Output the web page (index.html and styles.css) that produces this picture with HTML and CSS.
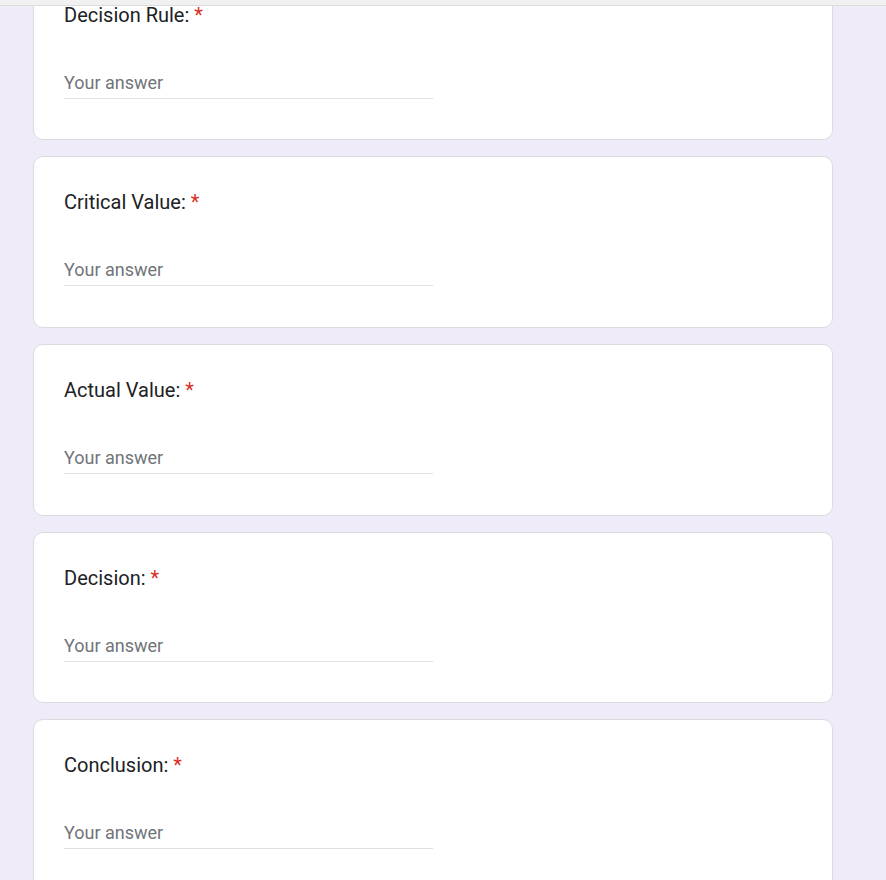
FILE: index.html
```html
<!DOCTYPE html>
<html>
<head>
<meta charset="utf-8">
<link rel="stylesheet" href="styles.css">
</head>
<body>
<div class="topbar"></div>
<main class="form">
  <section class="card">
    <div class="title">Decision Rule: <span class="req">*</span></div>
    <div class="answer"><span class="placeholder">Your answer</span></div>
  </section>
  <section class="card">
    <div class="title">Critical Value: <span class="req">*</span></div>
    <div class="answer"><span class="placeholder">Your answer</span></div>
  </section>
  <section class="card">
    <div class="title">Actual Value: <span class="req">*</span></div>
    <div class="answer"><span class="placeholder">Your answer</span></div>
  </section>
  <section class="card">
    <div class="title">Decision: <span class="req">*</span></div>
    <div class="answer"><span class="placeholder">Your answer</span></div>
  </section>
  <section class="card">
    <div class="title">Conclusion: <span class="req">*</span></div>
    <div class="answer"><span class="placeholder">Your answer</span></div>
  </section>
</main>
</body>
</html>
```
FILE: styles.css
```css
html, body {
  margin: 0;
  padding: 0;
  background: #efebf8;
  font-family: Roboto, "Liberation Sans", sans-serif;
  overflow: hidden;
}
.topbar {
  position: fixed;
  top: 0;
  left: 0;
  right: 0;
  height: 5px;
  background: #f1f1f1;
  border-bottom: 1px solid #dcdcdc;
  z-index: 2;
}
.form {
  display: flex;
  flex-direction: column;
  gap: 16px;
  width: 800px;
  margin: -31.5px 0 0 33px;
}
.card {
  background: #fff;
  border: 1px solid #dadce0;
  border-radius: 10px;
  padding: 30px 30px 30px;
  box-sizing: border-box;
  height: 171.7px;
}
.title {
  font-size: 20px;
  line-height: 30px;
  color: #202124;
  letter-spacing: 0;
}
.req {
  color: #d93025;
}
.answer {
  margin-top: 38px;
  width: 50%;
  height: 30px;
  border-bottom: 1px solid #e0e0e0;
  font-size: 18px;
  line-height: 30px;
  color: #70757a;
}
```
